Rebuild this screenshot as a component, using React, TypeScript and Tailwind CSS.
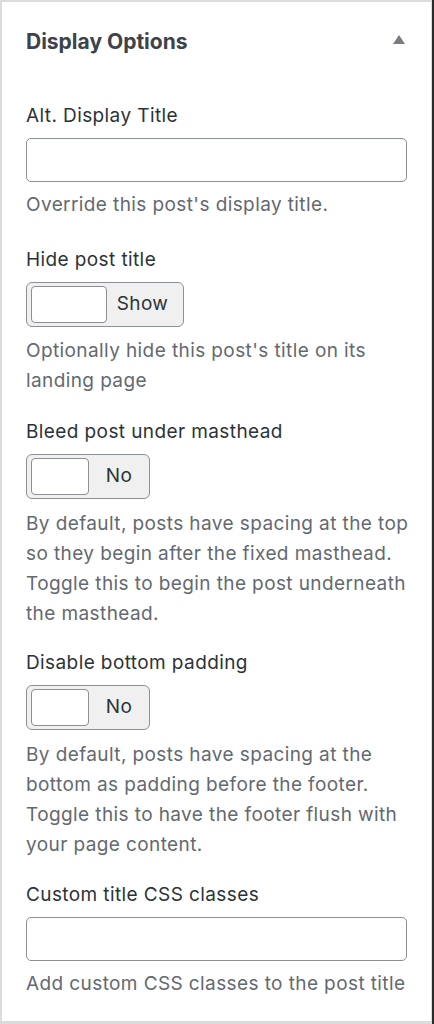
import { useState } from 'react'

type ToggleProps = {
  label: string
  width: string
  knob: string
  textPad?: string
}

const Toggle = ({ label, width, knob, textPad = '' }: ToggleProps) => {
  return (
    <div
      className={`flex h-[45px] items-center rounded-[6px] border border-[#8c8f94] bg-[#f0f0f1] pl-[4px] ${width}`}
    >
      <div className={`h-[37px] rounded-[4px] border border-[#8c8f94] bg-white ${knob}`} />
      <span className={`flex-1 text-center text-[#2c3338] ${textPad}`}>{label}</span>
    </div>
  )
}

const Field = ({
  label,
  help,
  helpGap = 'mt-[8px]',
  className = '',
  children
}: {
  label: string
  help: React.ReactNode
  helpGap?: string
  className?: string
  children: React.ReactNode
}) => (
  <div className={`flex flex-col ${className}`}>
    <label className="mb-[7px] leading-[30px] text-[#2c3338]">{label}</label>
    {children}
    <p className={`${helpGap} -mr-[6px] leading-[30px] text-[#646970]`}>{help}</p>
  </div>
)

export default function App() {
  const [alt, setAlt] = useState('')
  const [classes, setClasses] = useState('')

  return (
    <div className="flex h-[1024px] w-[434px] bg-white font-['Inter',sans-serif] text-[19px] tracking-[0.4px]">
      <div className="flex-1 border-b-[3px] border-l-2 border-r border-t-2 border-[#dcdcde]">
        <div className="flex h-[78px] items-center justify-between pl-[24px] pr-[26px] pt-[2px]">
          <h2 className="text-[21px] font-bold tracking-normal text-[#3c434a]">Display Options</h2>
          <svg width="12" height="9" viewBox="0 0 12 9" className="mb-[5px]">
            <path d="M6 0 L12 9 L0 9 Z" fill="#787c82" />
          </svg>
        </div>

        <div className="flex flex-col pl-[24px] pr-[24px] pt-[21px]">
          <Field label="Alt. Display Title" help="Override this post's display title.">
            <input
              value={alt}
              onChange={(e) => setAlt(e.target.value)}
              className="h-[44px] w-full rounded-[5px] border border-[#8c8f94] bg-white px-2"
            />
          </Field>

          <Field
            label="Hide post title"
            help="Optionally hide this post's title on its landing page"
            helpGap="mt-[9px]"
            className="mt-[25px]"
          >
            <Toggle label="Show" width="w-[158px]" knob="w-[76px]" textPad="pr-[5px]" />
          </Field>

          <Field
            label="Bleed post under masthead"
            help="By default, posts have spacing at the top so they begin after the fixed masthead. Toggle this to begin the post underneath the masthead."
            helpGap="mt-[10px]"
            className="mt-[21px]"
          >
            <Toggle label="No" width="w-[124px]" knob="w-[58px]" />
          </Field>

          <Field
            label="Disable bottom padding"
            help="By default, posts have spacing at the bottom as padding before the footer. Toggle this to have the footer flush with your page content."
            helpGap="mt-[10px]"
            className="mt-[19px]"
          >
            <Toggle label="No" width="w-[124px]" knob="w-[58px]" />
          </Field>

          <Field
            label="Custom title CSS classes"
            help="Add custom CSS classes to the post title"
            className="mt-[20px]"
          >
            <input
              value={classes}
              onChange={(e) => setClasses(e.target.value)}
              className="h-[44px] w-full rounded-[5px] border border-[#8c8f94] bg-white px-2"
            />
          </Field>
        </div>
      </div>
      <div className="w-[2px] bg-[#2a2a2a]" />
    </div>
  )
}
